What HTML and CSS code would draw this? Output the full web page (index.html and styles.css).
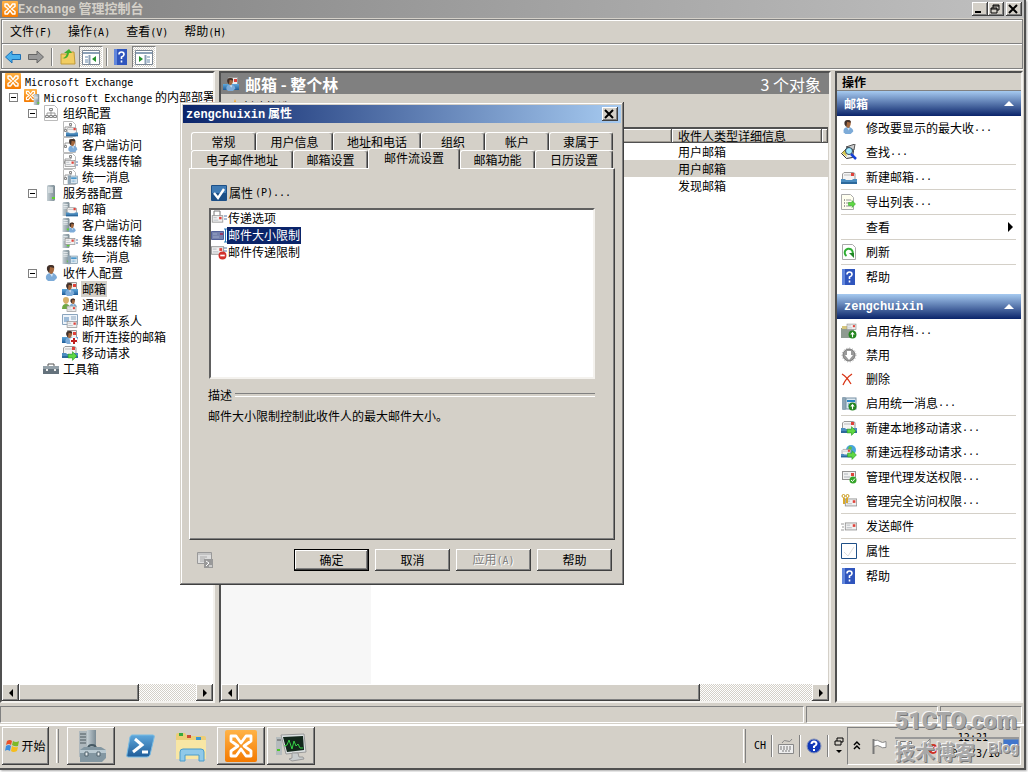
FILE: index.html
```
<!DOCTYPE html>
<html lang="zh-CN">
<head>
    <meta charset="UTF-8">
    <meta name="viewport" content="width=device-width, initial-scale=1.0">
    <title>Exchange 管理控制台</title>
    <link rel="stylesheet" href="styles.css">
</head>
<body>
    <!-- shared icons -->
    <svg class="sprites" aria-hidden="true">
        <defs>
            <linearGradient id="orange" x1="0" y1="0" x2="0" y2="1">
                <stop offset="0" stop-color="#ffb347"/><stop offset="1" stop-color="#f47a00"/>
            </linearGradient>
            <linearGradient id="steel" x1="0" y1="0" x2="1" y2="0">
                <stop offset="0" stop-color="#c6d0d5"/><stop offset="1" stop-color="#7b8b94"/>
            </linearGradient>
            <linearGradient id="blue" x1="0" y1="0" x2="0" y2="1">
                <stop offset="0" stop-color="#5fa8dc"/><stop offset="1" stop-color="#1f5c98"/>
            </linearGradient>
        </defs>
        <symbol id="exchange" viewBox="0 0 16 16">
            <rect width="16" height="16" rx="1" fill="url(#orange)"/>
            <path d="M3 5.500V3h2.500L8 6.500 10.500 3H13v2.500L9.500 8l3.500 2.500V13h-2.500L8 9.500 5.500 13H3v-2.500L6.500 8z" fill="none" stroke="#fff" stroke-width="1.400" stroke-linejoin="round"/>
        </symbol>
        <symbol id="mail" viewBox="0 0 16 16">
            <rect x="1.500" y="4.500" width="13" height="8" fill="#f1f1f1" stroke="#929292"/>
            <path d="M3 7h4M3 10h6" stroke="#b0b6bc"/>
            <rect x="10" y="6" width="3" height="3" fill="#e0423a"/>
        </symbol>
        <symbol id="tray" viewBox="0 0 16 16">
            <path d="M3 3.500h9l2 1V12H1.500V5z" fill="#f4f4f4" stroke="#999"/>
            <path d="M3 6h7" stroke="#bbb"/><rect x="10" y="4" width="3" height="3" fill="#e0423a"/>
            <path d="M0 10h4l1 1h6l1-1h4v5H0z" fill="#4c8dc0"/><path d="M0 13h16v2H0z" fill="#2d699c"/>
        </symbol>
        <symbol id="user" viewBox="0 0 16 16">
            <path d="M3 14q-1-5 4-6h3q4 2 4 5l-3 3H5z" fill="#7dabd8"/>
            <path d="M7 9h3l-1 3z" fill="#cfe2f3"/>
            <path d="M5 3q0-3 4-3 3 1 2 5-1 4-3 4-3-1-3-6z" fill="#a4683e"/>
            <path d="M4 5q-1-5 4-5 4 0 3 3L7 2 6 8z" fill="#40302a"/>
        </symbol>
        <symbol id="server" viewBox="0 0 16 16">
            <path d="M4 1l1-1h6l1 1v14l-1 1H4z" fill="url(#steel)"/>
            <path d="M5 3h5M5 5h5M5 7h5" stroke="#f0f4f5"/><path d="M9 12h3v2H9z" fill="#5ed12f"/>
        </symbol>
        <symbol id="org" viewBox="0 0 16 16">
            <path d="M1.500.500h10l3 3v12h-13z" fill="#fff" stroke="#bbb"/>
            <path d="M8 5v3M4 11V8h8v3M8 8v3" stroke="#999" fill="none"/>
            <path d="M6.500 3.500h3v2h-3zM2.500 10.500h3v2h-3zM6.500 10.500h3v2h-3zM10.500 10.500h3v2h-3z" fill="#eee" stroke="#888"/>
        </symbol>
        <symbol id="sheet" viewBox="0 0 16 16">
            <path d="M1.500.500h9l3 3v12h-12z" fill="#fff" stroke="#bbb"/>
            <path d="M3 9V6h6V3" stroke="#999" fill="none"/><path d="M7.500 2.500h2v2h-2zM2.500 8.500h2v2h-2z" fill="#eee" stroke="#888"/>
        </symbol>
        <symbol id="phone" viewBox="0 0 16 16">
            <rect x="1" y="2" width="4" height="13" rx="1" fill="#8fa5b5"/>
            <rect x="5" y="3" width="10" height="11" fill="#dce8f0" stroke="#7690a4"/>
            <path d="M6 5h8v2H6z" fill="#2684c4"/><path d="M7 9h6M7 11h6" stroke="#4a90c0" stroke-dasharray="1 1"/>
        </symbol>
        <symbol id="arrow" viewBox="0 0 16 16">
            <path d="M1 5h7V1l7 7-7 7v-4H1z" fill="#5fd844" stroke="#2a9a20"/>
        </symbol>
        <symbol id="plus" viewBox="0 0 16 16">
            <circle cx="8" cy="8" r="7" fill="#24851f"/><path d="M8 3l4 5H9v5H7V8H4z" fill="#fff"/>
        </symbol>
        <symbol id="minus" viewBox="0 0 16 16">
            <circle cx="8" cy="8" r="7" fill="#d3302c"/><path d="M4 8h8" stroke="#fff" stroke-width="3"/>
        </symbol>
        <symbol id="tick" viewBox="0 0 16 16">
            <circle cx="8" cy="8" r="7" fill="#36a52b"/><path d="M4 8l3 3 5-6" stroke="#fff" stroke-width="2" fill="none"/>
        </symbol>
        <symbol id="help" viewBox="0 0 16 16">
            <path d="M1 0h13v16H1z" fill="#2f55bd"/><path d="M1 0h3v16H1z" fill="#6186dc"/>
            <path d="M6 5.500q0-2.500 2.500-2.500T11 5.500Q11 7 8.500 8v2M8.500 11.500v2" stroke="#fff" stroke-width="1.600" fill="none"/>
        </symbol>
        <symbol id="s-mail" viewBox="0 0 16 16"><use href="#sheet"/><use href="#tray" x="4" y="4" width="12" height="12"/></symbol>
        <symbol id="s-user" viewBox="0 0 16 16"><use href="#sheet"/><use href="#user" x="4" y="2" width="13" height="13"/></symbol>
        <symbol id="s-hub" viewBox="0 0 16 16"><use href="#sheet"/><use href="#mail" x="2" y="4" width="12" height="12"/><path d="M14 9h2M14 12h2" stroke="#57a"/></symbol>
        <symbol id="s-um" viewBox="0 0 16 16"><use href="#sheet"/><use href="#phone" x="5" y="5" width="11" height="11"/></symbol>
        <symbol id="v-mail" viewBox="0 0 16 16"><use href="#server" x="-3" width="14" height="16"/><use href="#tray" x="4" y="4" width="12" height="12"/></symbol>
        <symbol id="v-user" viewBox="0 0 16 16"><use href="#server" x="-3" width="14" height="16"/><use href="#user" x="5" y="5" width="10" height="11"/></symbol>
        <symbol id="v-hub" viewBox="0 0 16 16"><use href="#server" x="-3" width="14" height="16"/><use href="#mail" x="2" y="2" width="12" height="12"/><path d="M14 7h2M14 10h2" stroke="#57a"/></symbol>
        <symbol id="v-um" viewBox="0 0 16 16"><use href="#server" x="-3" width="14" height="16"/><use href="#phone" x="5" y="5" width="11" height="11"/></symbol>
        <symbol id="mailbox" viewBox="0 0 16 16"><path d="M5.500 1.500h9v9h-9z" fill="#eee" stroke="#999"/><path d="M11 3h3v3h-3z" fill="#e0423a"/><path d="M0 8h16v6H0z" fill="url(#blue)"/><use href="#user" x="1" y="1" width="13" height="15"/></symbol>
        <symbol id="group" viewBox="0 0 16 16"><path d="M1 3q0-3 3-3t3 3-3 4q-3-1-3-4" fill="#d7b06a"/><path d="M0 12q0-5 4-5t4 5z" fill="#6fa843"/><use href="#user" x="6" y="1" width="10" height="11"/><use href="#mail" x="4" y="6" width="11" height="11"/></symbol>
        <symbol id="contact" viewBox="0 0 16 16"><path d="M.500 1.500h15v10H.500z" fill="#eef4fa" stroke="#8aa4bd"/><path d="M2 4h5v5H2z" fill="#9dbbd8"/><path d="M9 4h5M9 6h5" stroke="#8aa4bd"/><use href="#mail" x="4" y="5" width="12" height="12"/></symbol>
        <symbol id="cut" viewBox="0 0 16 16"><use href="#mailbox"/><circle cx="12" cy="12" r="4" fill="#fff"/><path d="M12 9v6M9 12h6" stroke="#c02020" stroke-width="2"/></symbol>
        <symbol id="move" viewBox="0 0 16 16"><use href="#tray" y="-2"/><use href="#arrow" x="5" y="6" width="11" height="10"/></symbol>
        <symbol id="remote" viewBox="0 0 16 16"><circle cx="10" cy="6" r="5" fill="#48a5dc"/><path d="M8 2l3 1-1 4-3-2z" fill="#61bd44"/><use href="#tray" y="3" width="11" height="11"/><use href="#arrow" x="6" y="6" width="10" height="10"/></symbol>
        <symbol id="box" viewBox="0 0 16 16"><path d="M5 5V3h6v2" stroke="#555" fill="none"/><path d="M0 5h16v8H0z" fill="#64727c"/><path d="M0 5h16v3H0z" fill="#94a1a9"/><path d="M3 8h2v2H3zM11 8h2v2h-2z" fill="#eee"/></symbol>
        <symbol id="find" viewBox="0 0 16 16"><path d="M5 3l9-3-1 6z" fill="#ccc" stroke="#555"/><path d="M.500 9.500l6-6 6 3-1 7-6 1z" fill="#eee" stroke="#333"/><path d="M1 9l3-3 2 7z" fill="#d7c84b"/><circle cx="8" cy="7" r="3.500" fill="#9feaff" stroke="#345"/><path d="M10 10l5 5" stroke="#1440d8" stroke-width="2.500"/></symbol>
        <symbol id="export" viewBox="0 0 16 16"><path d="M.500.500h9l3 3v12H.500z" fill="#fffff0" stroke="#aaa"/><path d="M3 6h1M3 9h1M3 12h1" stroke="#444"/><path d="M5 6h5M5 9h4M5 12h5" stroke="#999"/><use href="#arrow" x="7" y="6" width="8" height="8"/></symbol>
        <symbol id="refresh" viewBox="0 0 16 16"><path d="M1.500.500h10l3 3v12h-13z" fill="#fff" stroke="#aaa"/><path d="M5.500 12A4 4 0 1 1 11 11" fill="none" stroke="#2fae33" stroke-width="2"/><path d="M8 9h5v5z" fill="#208626"/></symbol>
        <symbol id="archive" viewBox="0 0 16 16"><path d="M0 5h7l1 1h5v9H0z" fill="#8f9b91"/><path d="M1 3h5v3H1z" fill="#d8c77e"/><use href="#mail" x="5" y="-2" width="11" height="11"/><use href="#plus" x="7" y="7" width="9" height="9"/></symbol>
        <symbol id="disable" viewBox="0 0 16 16"><circle cx="8" cy="8" r="7" fill="none" stroke="#aaa" stroke-dasharray="1 2"/><circle cx="8" cy="8" r="6" fill="#999" stroke="#777"/><path d="M8 13L4 8h2V4h4v4h2z" fill="#fff"/></symbol>
        <symbol id="delete" viewBox="0 0 16 16"><path d="M1 3q5 3 9 10M11 3Q5 7 2 14" fill="none" stroke="#d93516" stroke-width="1.300"/></symbol>
        <symbol id="um" viewBox="0 0 16 16"><use href="#phone"/><use href="#plus" x="7" y="7" width="9" height="9"/></symbol>
        <symbol id="sendas" viewBox="0 0 16 16"><use href="#mail" y="-2"/><use href="#tick" x="8" y="7" width="8" height="8"/></symbol>
        <symbol id="access" viewBox="0 0 16 16"><use href="#mail" x="3" y="2" width="14" height="14"/><circle cx="2.500" cy="3" r="1.500" fill="none" stroke="#c99a1c"/><circle cx="6.500" cy="3" r="1.500" fill="none" stroke="#c99a1c"/><path d="M3 5v6M6 5v5" stroke="#d9a92c" stroke-width="2" fill="none"/></symbol>
        <symbol id="send" viewBox="0 0 16 16"><use href="#mail" x="3" y="1" width="14" height="14"/><path d="M0 6h3M1 9h2M0 12h3" stroke="#999"/></symbol>
        <symbol id="prop" viewBox="0 0 16 16"><path d="M.500.500h15v15H.500z" fill="#fff" stroke="#1f4f87"/><path d="M3 9l4 4 6-9" stroke="#ddd" fill="none"/></symbol>
        <symbol id="left" viewBox="0 0 16 16"><path d="M.500 8L7 2v3.500h8.500v5H7V14z" fill="#4ab1ec" stroke="#1c6fb4"/></symbol>
        <symbol id="right" viewBox="0 0 16 16"><path d="M15.500 8L9 2v3.500H.500v5H9V14z" fill="#999" stroke="#666"/></symbol>
        <symbol id="pane" viewBox="0 0 18 16"><path d="M.500 1.500h17v14H.500z" fill="#fff" stroke="#7b8694"/><path d="M1 4h16M7.500 6v9" stroke="#8ba0b6" stroke-width="2"/><path d="M3 8h3M3 11h3M3 13h3" stroke="#68a"/><path d="M14 7v6l-4-3z" fill="#24912a"/></symbol>
    </svg>

    <div class="desktop">
        <header class="titlebar">
            <svg class="icon"><use href="#exchange"/></svg>
            <h1><span class="en">Exchange</span> 管理控制台</h1>
            <div class="caption">
                <button class="cap" aria-label="最小化"><svg viewBox="0 0 12 10"><path d="M2 8h6" stroke="#000" stroke-width="2"/></svg></button><button class="cap" aria-label="还原"><svg viewBox="0 0 12 10"><path d="M4 1h6v5H8M4 1v3M4 2h6M2 4h6v5H2zM2 5h6" stroke="#000" fill="none"/></svg></button>
                <button class="cap" aria-label="关闭"><svg viewBox="0 0 12 10"><path d="M2 1l8 8M10 1L2 9" stroke="#000" stroke-width="2"/></svg></button>
            </div>
        </header>

        <div class="bars">
            <nav class="menubar">
                <button>文件<span class="en">(F)</span></button>
                <button>操作<span class="en">(A)</span></button>
                <button>查看<span class="en">(V)</span></button>
                <button>帮助<span class="en">(H)</span></button>
            </nav>
            <div class="toolbar">
                <button aria-label="后退"><svg class="icon"><use href="#left"/></svg></button>
                <button aria-label="前进"><svg class="icon"><use href="#right"/></svg></button>
                <i class="sep"></i>
                <button aria-label="向上"><svg class="icon" viewBox="0 0 16 16"><path d="M1 5h6l1-2h6l1 12H1z" fill="#f2cd62" stroke="#c09a3a"/><path d="M2 9q4 0 5-5H4l5-4 3 4H9q-1 7-7 5" fill="#3fae2c"/></svg></button>
                <button class="pressed" aria-label="控制台树"><svg class="icon"><use href="#pane"/></svg></button>
                <i class="sep"></i>
                <button aria-label="帮助"><svg class="icon"><use href="#help"/></svg></button>
                <button class="pressed" aria-label="操作窗格"><svg class="icon flip"><use href="#pane"/></svg></button>
            </div>
        </div>

        <main class="panes">
            <section class="pane tree-pane">
                <div class="tree">
                    <a class="node" href="#"><svg class="icon"><use href="#exchange"/></svg><span><span class="en">Microsoft Exchange</span></span></a>
                    <ul>
                        <li>
                            <a class="node" href="#"><i class="toggle"></i><svg class="icon" viewBox="0 0 16 16"><use href="#exchange" width="13" height="13"/><use href="#server" x="7" y="5" width="11" height="11"/></svg><span><span class="en">Microsoft Exchange</span> 的内部部署</span></a>
                            <ul>
                                <li>
                                    <a class="node" href="#"><i class="toggle"></i><svg class="icon"><use href="#org"/></svg><span>组织配置</span></a>
                                    <ul>
                                        <li><a class="node" href="#"><svg class="icon"><use href="#s-mail"/></svg><span>邮箱</span></a></li>
                                        <li><a class="node" href="#"><svg class="icon"><use href="#s-user"/></svg><span>客户端访问</span></a></li>
                                        <li><a class="node" href="#"><svg class="icon"><use href="#s-hub"/></svg><span>集线器传输</span></a></li>
                                        <li><a class="node" href="#"><svg class="icon"><use href="#s-um"/></svg><span>统一消息</span></a></li>
                                    </ul>
                                </li>
                                <li>
                                    <a class="node" href="#"><i class="toggle"></i><svg class="icon"><use href="#server"/></svg><span>服务器配置</span></a>
                                    <ul>
                                        <li><a class="node" href="#"><svg class="icon"><use href="#v-mail"/></svg><span>邮箱</span></a></li>
                                        <li><a class="node" href="#"><svg class="icon"><use href="#v-user"/></svg><span>客户端访问</span></a></li>
                                        <li><a class="node" href="#"><svg class="icon"><use href="#v-hub"/></svg><span>集线器传输</span></a></li>
                                        <li><a class="node" href="#"><svg class="icon"><use href="#v-um"/></svg><span>统一消息</span></a></li>
                                    </ul>
                                </li>
                                <li>
                                    <a class="node" href="#"><i class="toggle"></i><svg class="icon"><use href="#user"/></svg><span>收件人配置</span></a>
                                    <ul>
                                        <li><a class="node current" href="#"><svg class="icon"><use href="#mailbox"/></svg><span>邮箱</span></a></li>
                                        <li><a class="node" href="#"><svg class="icon"><use href="#group"/></svg><span>通讯组</span></a></li>
                                        <li><a class="node" href="#"><svg class="icon"><use href="#contact"/></svg><span>邮件联系人</span></a></li>
                                        <li><a class="node" href="#"><svg class="icon"><use href="#cut"/></svg><span>断开连接的邮箱</span></a></li>
                                        <li><a class="node" href="#"><svg class="icon"><use href="#move"/></svg><span>移动请求</span></a></li>
                                    </ul>
                                </li>
                                <li class="leaf"><a class="node" href="#"><svg class="icon"><use href="#box"/></svg><span>工具箱</span></a></li>
                            </ul>
                        </li>
                    </ul>
                </div>
                <div class="hscroll">
                    <button aria-label="向左"><i class="tri-left"></i></button>
                    <div class="thumb tree-thumb"></div>
                    <button aria-label="向右"><i class="tri-right"></i></button>
                </div>
            </section>

            <section class="pane list-pane">
                <div class="list-title">
                    <svg class="icon"><use href="#mailbox"/></svg>
                    <h2>邮箱 - 整个林</h2>
                    <span>3 个对象</span>
                </div>
                <div class="filter">
                    <button><svg class="icon" viewBox="0 0 16 16"><path d="M0 3h14L9 8v6H6V8z" fill="#999"/><path d="M12 0l1 3h3l-2 2 1 3-3-2-3 2 1-3-2-2h3z" fill="#f5a623"/></svg>创建筛选器</button>
                </div>
                <div class="list">
                    <table>
                        <colgroup><col class="c-name"><col><col class="c-type"><col class="c-end"></colgroup>
                        <thead>
                            <tr><th></th><th></th><th>收件人类型详细信息</th><th></th></tr>
                        </thead>
                        <tbody>
                            <tr><td></td><td></td><td>用户邮箱</td><td></td></tr>
                            <tr class="picked"><td></td><td></td><td>用户邮箱</td><td></td></tr>
                            <tr><td></td><td></td><td>发现邮箱</td><td></td></tr>
                        </tbody>
                    </table>
                </div>
                <div class="hscroll">
                    <button aria-label="向左"><i class="tri-left"></i></button>
                    <div class="thumb list-thumb"></div>
                    <button aria-label="向右"><i class="tri-right"></i></button>
                </div>
            </section>

            <aside class="pane actions">
                <h2>操作</h2>
                <h3>邮箱<i class="tri-up"></i></h3>
                <ul>
                    <li><button><svg class="icon"><use href="#user" width="14" height="14"/></svg>修改要显示的最大收<span class="en">...</span></button></li>
                    <li><button><svg class="icon"><use href="#find"/></svg>查找<span class="en">...</span></button></li>
                    <li class="ruled"><button><svg class="icon"><use href="#tray"/></svg>新建邮箱<span class="en">...</span></button></li>
                    <li class="ruled"><button><svg class="icon"><use href="#export"/></svg>导出列表<span class="en">...</span></button></li>
                    <li class="ruled"><button><svg class="icon"></svg>查看<i class="tri-right"></i></button></li>
                    <li class="ruled"><button><svg class="icon"><use href="#refresh"/></svg>刷新</button></li>
                    <li class="ruled"><button><svg class="icon"><use href="#help"/></svg>帮助</button></li>
                </ul>
                <h3><span class="en">zengchuixin</span><i class="tri-up"></i></h3>
                <ul>
                    <li><button><svg class="icon"><use href="#archive"/></svg>启用存档<span class="en">...</span></button></li>
                    <li><button><svg class="icon"><use href="#disable"/></svg>禁用</button></li>
                    <li><button><svg class="icon"><use href="#delete"/></svg>删除</button></li>
                    <li><button><svg class="icon"><use href="#um"/></svg>启用统一消息<span class="en">...</span></button></li>
                    <li class="ruled"><button><svg class="icon"><use href="#move"/></svg>新建本地移动请求<span class="en">...</span></button></li>
                    <li><button><svg class="icon"><use href="#remote"/></svg>新建远程移动请求<span class="en">...</span></button></li>
                    <li class="ruled"><button><svg class="icon"><use href="#sendas"/></svg>管理代理发送权限<span class="en">...</span></button></li>
                    <li><button><svg class="icon"><use href="#access"/></svg>管理完全访问权限<span class="en">...</span></button></li>
                    <li class="ruled"><button><svg class="icon"><use href="#send"/></svg>发送邮件</button></li>
                    <li class="ruled"><button><svg class="icon"><use href="#prop"/></svg>属性</button></li>
                    <li class="ruled"><button><svg class="icon"><use href="#help"/></svg>帮助</button></li>
                </ul>
            </aside>
        </main>

        <div class="statusbar"><div></div><div></div><div></div></div>

        <footer class="taskbar">
            <button class="start">
                <svg class="icon" viewBox="0 0 16 16"><path d="M2 3q3-2 5 0L6 7Q4 5 1 7z" fill="#e8502a"/><path d="M8 3q3 2 6 0l-1 5q-3 1-6-1z" fill="#7db928"/><path d="M1 8q3-2 5 0l-1 5q-3-2-5 0z" fill="#3a8de0"/><path d="M7 8q3 2 6 1l-1 4q-4 2-6 0z" fill="#f6bd1c"/></svg>开始
            </button>
            <i class="grip"></i>
            <div class="tasks">
                <button class="raised" aria-label="服务器管理器"><svg viewBox="0 0 32 32"><path d="M4 1h10v26H4z" fill="#aeb8bd"/><path d="M12 0h9v28h-9z" fill="url(#steel)"/><path d="M5 4h6M5 7h6M5 10h6M5 13h6" stroke="#4d585e"/><path d="M13 19q0-4 4-4t4 4" stroke="#465963" stroke-width="2" fill="none"/><path d="M5 20l4-3h17l5 3v8l-4 4H5z" fill="#8397a2"/><path d="M5 20h26v3H5z" fill="#b9c9d1"/><path d="M10 22h3v4h-3zM22 22h3v4h-3z" fill="#e8eef0" stroke="#50636d"/></svg></button>
                <button aria-label="PowerShell"><svg viewBox="0 0 32 32"><path d="M7 5h21q2 0 1 3l-4 17q-1 2-3 2H3q-2 0-1-3L5 7q1-2 2-2z" fill="url(#blue)" stroke="#79bce4"/><path d="M10 9l7 6-9 7M17 22h6" stroke="#fff" stroke-width="3" fill="none"/></svg></button>
                <button aria-label="资源管理器"><svg viewBox="0 0 32 32"><path d="M1 5q0-2 2-2h7l2 3h17q2 0 2 2v20H1z" fill="#ecce78"/><path d="M4 3h4v3H4z" fill="#37a93e"/><path d="M12 5h4v3h-4z" fill="#cf4a34"/><path d="M21 7h5v3h-5z" fill="#3a97d2"/><path d="M1 10h30v19H1z" fill="#f8e6a4"/><path d="M5 31v-9q0-3 3-3h18q3 0 3 3v9h-5v-6H10v6z" fill="#8fc9e9" stroke="#4b9ccb"/></svg></button>
                <button class="raised" aria-label="Exchange"><svg><use href="#exchange"/></svg></button>
                <button class="raised" aria-label="监视器"><svg viewBox="0 0 32 32"><path d="M1 7h6v18H1z" fill="#b5bcbd"/><path d="M2 10h4" stroke="#555"/><path d="M2 19h3v2H2z" fill="#4cc628"/><path d="M6 5l23-1 2 18-20 2z" fill="#dde2e3" stroke="#999"/><path d="M8 7l20-1 1 14-17 2z" fill="#12271a"/><path d="M9 16l3-1 2-5 3 9 2-8 2 5 2-2 2 4h3" stroke="#36d246" fill="none"/><path d="M17 23h6l1 4h4l1 2-12 2-3-2 3-1z" fill="#c7cccd" stroke="#999"/></svg></button>
            </div>
            <i class="grip"></i>
            <div class="lang">
                <span class="en">CH</span>
                <i class="sep"></i>
                <svg class="icon" viewBox="0 0 16 16"><path d="M.500 6.500h15v9H.500z" fill="#eee" stroke="#888"/><path d="M2 9h12M2 11h12M4 13h8" stroke="#777" stroke-dasharray="2 1"/><path d="M4 5q2-4 5-2t5-2" stroke="#888" fill="none"/></svg>
                <i class="sep"></i>
                <svg class="icon" viewBox="0 0 16 16"><circle cx="8" cy="8" r="7" fill="#1038b8" stroke="#8794b8"/><path d="M5.500 6q0-2.500 2.500-2.500T10.500 6Q10.500 7 8 8.500V10M8 11v2" stroke="#fff" stroke-width="2" fill="none"/></svg>
                <i class="sep"></i>
                <svg class="mini" viewBox="0 0 10 18"><path d="M3 1h6v4H7M3 1v3M1 4h6v4H1z" stroke="#000" fill="none"/><path d="M2 13h6l-3 3z"/></svg>
            </div>
            <div class="tray">
                <svg class="mini" viewBox="0 0 10 18"><path d="M2 8l3-3 3 3M2 12l3-3 3 3" stroke="#000" stroke-width="1.500" fill="none"/></svg>
                <svg class="icon" viewBox="0 0 16 16"><path d="M2.500 1v15" stroke="#777" stroke-width="2"/><path d="M3 2.500q4-1 6 1t6 0v6q-4 1-6-1t-6 0z" fill="#fff" stroke="#888"/></svg>
                <svg class="icon" viewBox="0 0 16 16"><path d="M4.500 3.500h11v8h-11z" fill="#eee" stroke="#777"/><path d="M1 2v5h3M2 7v8h8" stroke="#777" fill="none"/></svg>
                <svg class="icon" viewBox="0 0 16 16"><path d="M1 6h3l5-5v14l-5-4H1z" fill="#ddd" stroke="#888"/><circle cx="12" cy="11" r="4" fill="#fff" stroke="#cf3027" stroke-width="2"/><path d="M9 14l6-6" stroke="#cf3027" stroke-width="2"/></svg>
                <time class="en">12:21<br>2012/3/10</time>
                <svg class="icon" viewBox="0 0 16 16"><path d="M.500 1.500h15v12H.500z" fill="#3f75cc" stroke="#6f8db8"/></svg>
            </div>
        </footer>

        <section class="dialog" role="dialog" aria-labelledby="dialog-title">
            <header>
                <h2 id="dialog-title"><span class="en">zengchuixin</span> 属性</h2>
                <button class="cap" aria-label="关闭"><svg viewBox="0 0 12 10"><path d="M2 1l8 8M10 1L2 9" stroke="#000" stroke-width="2"/></svg></button>
            </header>
            <div class="tabs" role="tablist">
                <div class="tab-row back">
                    <button role="tab">常规</button><button role="tab">用户信息</button><button role="tab">地址和电话</button><button role="tab">组织</button><button role="tab">帐户</button><button role="tab">隶属于</button>
                </div>
                <div class="tab-row front">
                    <button role="tab">电子邮件地址</button><button role="tab">邮箱设置</button><button role="tab" class="active" aria-selected="true">邮件流设置</button><button role="tab">邮箱功能</button><button role="tab">日历设置</button>
                </div>
            </div>
            <div class="page" role="tabpanel">
                <button class="props"><svg class="icon" viewBox="0 0 16 16"><rect width="16" height="16" rx="1" fill="#1c4f87"/><path d="M1 1h14v7H1z" fill="#3f7ab4"/><path d="M3 8l4 5 6-9" stroke="#fff" stroke-width="2.400" fill="none"/></svg>属性<span class="en">(P)...</span></button>
                <ul class="options">
                    <li><svg class="icon" viewBox="0 0 16 16"><path d="M3 1h6v8H3z" fill="#fff" stroke="#777"/><use href="#mail" x="-1" y="2" width="15" height="13"/><path d="M13 6h3M13 9h3" stroke="#57a"/></svg><span>传递选项</span></li>
                    <li class="chosen"><svg class="icon" viewBox="0 0 16 16"><path d="M.500 4.500h12v8H.500z" fill="#7581ac" stroke="#536099"/><path d="M2 7h4M2 10h6" stroke="#9ba6c8"/><path d="M9 6h3v2H9z" fill="#963c63"/><path d="M14.500 2v13M13 2h3M13 15h3" stroke="#277cba"/></svg><span>邮件大小限制</span></li>
                    <li><svg class="icon" viewBox="0 0 16 16"><use href="#mail" x="-1" y="-2" width="15" height="16"/><path d="M13 4h3M13 7h3" stroke="#57a"/><use href="#minus" x="7" y="7" width="9" height="9"/></svg><span>邮件传递限制</span></li>
                </ul>
                <h3>描述</h3>
                <p>邮件大小限制控制此收件人的最大邮件大小。</p>
            </div>
            <div class="buttons">
                <svg class="icon" viewBox="0 0 16 16"><path d="M.500.500h14v11H.500z" fill="#ddd" stroke="#999"/><path d="M1 2h13M3 5h7M3 7h5M3 9h4" stroke="#aaa"/><path d="M7 7h9v9H7z" fill="#999"/><path d="M9 9l3 2-3 3M12 14h3" stroke="#fff" fill="none"/></svg>
                <button class="default">确定</button>
                <button>取消</button>
                <button disabled>应用<span class="en">(A)</span></button>
                <button>帮助</button>
            </div>
        </section>

        <div class="watermark">
            <strong>51CTO.com</strong>
            <div><b>技术博客</b><span>Blog</span></div>
        </div>
    </div>
</body>
</html>
```
FILE: styles.css
```
* {
    box-sizing: border-box;
}
body {
    margin: 0;
    padding: 0 4px 4px 0;
    height: 100vh;
    background: #fff;
    color: #000;
    font: 12px/16px "Noto Sans CJK SC", sans-serif;
}
h1, h2, h3, p, ul {
    margin: 0;
    padding: 0;
    font-size: 12px;
    list-style: none;
}
button {
    margin: 0;
    padding: 0;
    border: 0;
    background: none;
    color: inherit;
    font: inherit;
    white-space: nowrap;
}
a {
    color: inherit;
    text-decoration: none;
}
.en {
    font-family: "DejaVu Sans Mono", monospace;
    font-size: 10px;
}
.sprites {
    position: absolute;
    width: 0;
    height: 0;
}
.icon {
    width: 16px;
    height: 16px;
    flex: none;
}
.desktop {
    position: relative;
    display: flex;
    flex-direction: column;
    height: 100%;
    background: #d4d0c8;
    box-shadow: 1px 1px 0 1px #505050, 2px 2px 2px 1px #aaa;
}

/* title bar */
.titlebar {
    display: flex;
    align-items: center;
    height: 18px;
    flex: none;
    padding: 0 2px;
    background: linear-gradient(90deg, #808080, #c0c0c0);
    color: #d4d0c8;
}
.titlebar h1 {
    flex: 1;
    font-size: 13px;
}
.titlebar h1 .en,
.dialog header .en,
.actions h3 .en {
    font-family: "Liberation Mono", monospace;
    font-size: 12px;
}
.caption {
    display: flex;
}
.cap {
    width: 16px;
    height: 14px;
    background: #d4d0c8;
    box-shadow: inset -1px -1px #404040, inset 1px 1px #fff, inset -2px -2px #808080;
}
.cap:last-child {
    margin-left: 2px;
}
.cap svg {
    display: block;
    width: 12px;
    height: 10px;
    margin: 0 1px;
}

/* menu and toolbar */
.bars {
    flex: none;
    margin: 1px 1px 0;
    border: 1px solid #808080;
    box-shadow: inset 1px 1px #fff, 0 1px #fff;
}
.menubar {
    display: flex;
    height: 24px;
    border-bottom: 1px solid #808080;
}
.menubar button {
    padding: 0 8px;
}
.toolbar {
    display: flex;
    align-items: center;
    height: 24px;
    padding: 0 3px;
    gap: 7px;
    border-top: 1px solid #fff;
}
.toolbar button {
    height: 16px;
}
.toolbar .icon {
    display: block;
}
.toolbar .pressed {
    width: 24px;
    height: 22px;
    padding: 0 2px;
    margin-left: -4px;
    border: 1px solid;
    border-color: #808080 #fff #fff #808080;
    background: repeating-conic-gradient(#fff 0 25%, #d4d0c8 0 50%) 0 0 / 2px 2px;
}
.toolbar .pressed .icon {
    width: 18px;
}
.toolbar .pressed + .sep {
    margin: 0 -2px 0 -4px;
}
.flip {
    transform: scaleX(-1);
}
.sep {
    width: 2px;
    height: 18px;
    border-left: 1px solid #808080;
    border-right: 1px solid #fff;
}

/* three panes */
.panes {
    display: grid;
    grid-template-columns: 215px 1fr 188px;
    gap: 4px;
    flex: 1;
    min-height: 0;
    margin: 2px 1px 2px 0;
}
.pane {
    display: flex;
    flex-direction: column;
    min-width: 0;
    overflow: hidden;
    border: 2px solid;
    border-color: #505050 #f4f2ee #f4f2ee #505050;
}
.tree {
    flex: 1;
    padding-left: 3px;
    background: #fff;
    overflow: hidden;
}
.tree ul {
    padding-left: 19px;
}
.tree > ul {
    padding-left: 4px;
}
.tree ul ul ul {
    padding-left: 34px;
}
.tree .leaf {
    padding-left: 15px;
}
.node {
    display: flex;
    gap: 3px;
    height: 16px;
    white-space: nowrap;
}
.node span {
    padding: 0 1px;
}
.node span span {
    padding: 0;
}
.node.current > span {
    background: #d4d0c8;
}
.toggle {
    width: 9px;
    height: 9px;
    flex: none;
    margin: 4px 3px 0 0;
    border: 1px solid #808080;
    background: linear-gradient(#000, #000) center / 5px 1px no-repeat;
}
.hscroll {
    display: flex;
    flex: none;
    height: 17px;
    background: repeating-conic-gradient(#fff 0 25%, #d4d0c8 0 50%) 0 0 / 2px 2px;
}
.hscroll button,
.thumb {
    display: flex;
    align-items: center;
    justify-content: center;
    width: 17px;
    flex: none;
    background: #d4d0c8;
    box-shadow: inset -1px -1px #404040, inset 1px 1px #fff, inset -2px -2px #808080;
}
.hscroll button:last-child {
    margin-left: auto;
}
.tree-thumb {
    width: 57%;
}
.list-thumb {
    width: 76%;
}
.tri-left, .tri-right, .tri-up {
    border: 4px solid transparent;
}
.tri-left {
    border-left-width: 0;
    border-right-color: #000;
}
.tri-right {
    border-right-width: 0;
    border-left-color: #000;
}
.tri-up {
    border-width: 0 5px 5px;
    border-bottom-color: #fff;
}

/* recipient list */
.list-title {
    display: flex;
    align-items: center;
    height: 21px;
    flex: none;
    padding: 0 8px 0 2px;
    gap: 6px;
    background: #808080;
    color: #fff;
    font-size: 16px;
}
.list-title h2 {
    flex: 1;
    font-size: 16px;
}
.filter {
    height: 33px;
    flex: none;
    padding: 5px 2px;
}
.filter button {
    display: flex;
    gap: 3px;
}
.list {
    flex: 1;
    margin-right: 1px;
    border-top: 2px solid #505050;
    background: linear-gradient(#f7f7f7, #f7f7f7) 0 0 / 150px 100% no-repeat #fff;
}
table {
    width: 100%;
    border-collapse: collapse;
    table-layout: fixed;
}
.c-name {
    width: 150px;
}
.c-type {
    width: 150px;
}
.c-end {
    width: 6px;
}
th, td {
    height: 17px;
    padding: 0 6px;
    font-weight: normal;
    text-align: left;
    line-height: 14px;
}
th {
    height: 14px;
    background: #d4d0c8;
    box-shadow: inset -1px -1px #505050, inset 1px 1px #fff, inset -2px -2px #a09c94;
}
.c-end, th:last-child, td:last-child {
    padding: 0;
}
.picked {
    background: #d4d0c8;
}

/* actions */
.actions {
    background: #fff;
}
.actions h2 {
    height: 18px;
    flex: none;
    padding-left: 5px;
    border-bottom: 1px solid #808080;
    background: #d4d0c8;
    line-height: 17px;
}
.actions h3 {
    display: flex;
    align-items: center;
    justify-content: space-between;
    height: 25px;
    flex: none;
    padding: 0 7px;
    background: linear-gradient(#a6caf0, #0a246a);
    color: #fff;
}
.actions ul {
    padding: 0 5px 0 4px;
}
.actions ul + h3 {
    margin-top: 5px;
}
.actions button {
    display: flex;
    align-items: center;
    width: 100%;
    height: 24px;
}
.actions .icon {
    margin-right: 9px;
}
.actions .ruled {
    border-top: 1px solid #d4d0c8;
}
.actions button .tri-right {
    margin: 0 3px 0 auto;
    border-width: 5px 0 5px 5px;
}

/* status bar and taskbar */
.statusbar {
    display: grid;
    grid-template-columns: 1fr 132px 82px;
    gap: 2px;
    height: 20px;
    flex: none;
    padding: 1px 2px 1px 0;
    border-bottom: 1px solid #fff;
}
.statusbar div {
    border: 1px solid;
    border-color: #808080 #fff #fff #808080;
}
.taskbar {
    display: flex;
    align-items: center;
    height: 43px;
    flex: none;
    padding: 0 3px 2px 2px;
    border-top: 1px solid #fff;
}
.start, .raised {
    background: #d4d0c8;
    box-shadow: inset -1px -1px #404040, inset 1px 1px #fff, inset -2px -2px #808080;
}
.start {
    display: flex;
    align-items: center;
    justify-content: center;
    width: 47px;
    height: 38px;
}
.grip {
    width: 3px;
    height: 34px;
    margin: 0 8px 0 7px;
    border-left: 1px solid #fff;
    border-right: 1px solid #808080;
}
.tasks {
    display: flex;
    flex: 1;
    gap: 2px;
}
.tasks button {
    width: 48px;
    height: 38px;
}
.tasks svg {
    display: block;
    width: 32px;
    height: 32px;
    margin: 0 auto;
}
.lang, .tray {
    display: flex;
    align-items: center;
}
.lang {
    gap: 5px;
    margin-right: 3px;
}
.lang .sep {
    height: 22px;
}
.mini {
    width: 10px;
    height: 18px;
}
.tray {
    width: 174px;
    height: 38px;
    padding: 0 1px 0 4px;
    gap: 9px;
    border: 1px solid;
    border-color: #808080 #fff #fff #808080;
}
.tray time {
    text-align: center;
}
.tray time + .icon {
    margin-left: -6px;
}

/* mailbox properties dialog */
.dialog {
    position: absolute;
    left: 180px;
    top: 102px;
    width: 444px;
    padding: 3px 3px 14px;
    background: #d4d0c8;
    box-shadow: inset -1px -1px #404040, inset 1px 1px #d4d0c8, inset -2px -2px #808080, inset 2px 2px #fff;
}
.dialog header {
    display: flex;
    align-items: center;
    justify-content: space-between;
    height: 18px;
    padding: 0 3px;
    background: linear-gradient(90deg, #0a246a, #a6caf0);
    color: #fff;
}
.tabs {
    margin: 9px 8px 0;
}
.tab-row {
    display: grid;
    height: 18px;
}
.back {
    grid-template-columns: 65fr 77fr 88fr 64fr 64fr 64fr;
}
.front {
    grid-template-columns: 102fr 75fr 92fr 75fr 78fr;
}
.tab-row button {
    border-top: 1px solid #fff;
    border-left: 1px solid #fff;
    border-right: 1px solid #404040;
    border-radius: 3px 3px 0 0;
    background: #d4d0c8;
    box-shadow: inset -1px 0 #808080;
    line-height: 17px;
}
.tab-row .active {
    position: relative;
    margin: -2px 0 -1px;
    padding-bottom: 3px;
}
.page {
    height: 372px;
    margin: 0 6px 9px;
    padding: 15px 19px 15px 18px;
    border: 1px solid;
    border-color: #fff #404040 #404040 #fff;
    box-shadow: inset -1px -1px #808080;
}
.props {
    display: flex;
    align-items: center;
    gap: 2px;
    height: 18px;
    margin-left: 3px;
}
.options {
    height: 171px;
    margin: 6px 0 8px 1px;
    border: 2px solid;
    border-color: #606060 #f4f2ee #f4f2ee #606060;
    background: #fff;
}
.options li {
    display: flex;
    height: 17px;
}
.options span {
    padding: 0 1px;
}
.chosen span {
    background: #0a246a;
    color: #fff;
}
.page h3 {
    display: flex;
    align-items: center;
    gap: 3px;
    font-weight: normal;
}
.page h3::after {
    content: "";
    flex: 1;
    height: 2px;
    border-top: 1px solid #808080;
    border-bottom: 1px solid #fff;
}
.page p {
    margin-top: 5px;
}
.buttons {
    display: flex;
    align-items: center;
    gap: 6px;
    padding: 0 9px 0 14px;
}
.buttons .icon {
    margin-right: auto;
}
.buttons button {
    width: 75px;
    height: 22px;
    box-shadow: inset -1px -1px #404040, inset 1px 1px #fff, inset -2px -2px #808080;
}
.buttons .default {
    border: 1px solid #000;
}
.buttons button:disabled {
    color: #808080;
    text-shadow: 1px 1px #fff;
}

/* watermark over the tray */
.watermark {
    position: absolute;
    right: 5px;
    bottom: 3px;
    width: 124px;
    color: #a8a8a8;
    text-shadow: -1px -1px #f4f4f4, 1px 1px #777;
    pointer-events: none;
}
.watermark strong {
    display: block;
    border-bottom: 2px solid #999;
    font: 900 23px/30px Roboto, "Liberation Sans", sans-serif;
}
.watermark div {
    display: flex;
    justify-content: space-between;
    font-size: 20px;
    line-height: 26px;
}
.watermark span {
    font: bold 14px/18px "Liberation Sans", sans-serif;
}
```
